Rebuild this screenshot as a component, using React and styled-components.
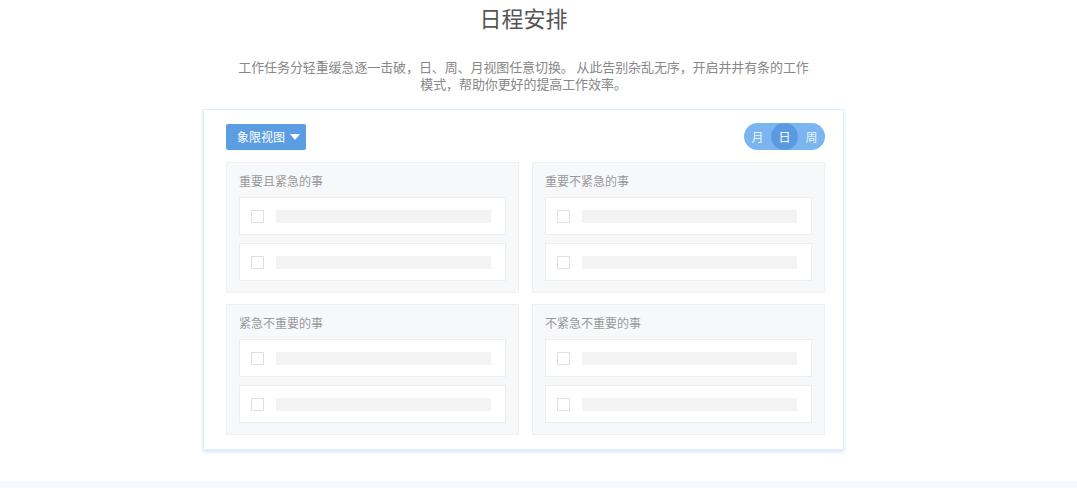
import React from 'react'
import styled, { createGlobalStyle } from 'styled-components'

const GlobalStyle = createGlobalStyle`
    body {
        margin: 0;
        background: #fff;
        font-family: "Noto Sans CJK SC", "Noto Sans", sans-serif;
    }
`

const Container = styled.div`
    width: 1047px;
    display: flex;
    flex-direction: column;
    align-items: center;
`

const Title = styled.h1`
    margin: 0;
    font-size: 22px;
    font-weight: 400;
    line-height: 34px;
    color: #555;
`

const Desc = styled.p`
    margin: 24px 0 0;
    font-size: 13px;
    line-height: 17px;
    letter-spacing: -0.1px;
    color: #888;
    text-align: center;
`

const Card = styled.div`
    width: 641px;
    box-sizing: border-box;
    margin-top: 17px;
    padding: 13px 18px 14px 22px;
    border: 1px solid #e2eef9;
    box-shadow: 0 2px 3px rgba(110, 165, 230, 0.3);
    background: #fff;
`

const Toolbar = styled.div`
    display: flex;
    justify-content: space-between;
    align-items: center;
    height: 27px;
    margin-bottom: 12px;
`

const ViewButton = styled.div`
    width: 80px;
    height: 26px;
    box-sizing: border-box;
    padding-left: 11px;
    display: flex;
    align-items: center;
    gap: 5px;
    background: #5b9de3;
    border-radius: 2px;
    color: #fff;
    font-size: 12px;
`

const Caret = styled.span`
    width: 0;
    height: 0;
    border-left: 5px solid transparent;
    border-right: 5px solid transparent;
    border-top: 6px solid #fff;
`

const Toggle = styled.div`
    display: flex;
    height: 27px;
    border-radius: 14px;
    background: #7ab5f0;
`

const ToggleItem = styled.div`
    width: 27px;
    height: 27px;
    border-radius: 50%;
    display: flex;
    align-items: center;
    justify-content: center;
    font-size: 12px;
    color: ${props => props.active ? '#fff' : 'rgba(255,255,255,0.85)'};
    background: ${props => props.active ? '#5a9ae0' : 'transparent'};
`

const Grid = styled.div`
    display: grid;
    grid-template-columns: 1fr 1fr;
    column-gap: 13px;
    row-gap: 11px;
`

const Quadrant = styled.div`
    background: #f7f8fa;
    border: 1px solid #eef0f2;
    padding: 0 12px 11px;
`

const QuadTitle = styled.div`
    padding: 9px 0 7px;
    line-height: 18px;
    font-size: 12px;
    color: #999;
`

const Rows = styled.div`
    display: flex;
    flex-direction: column;
    gap: 8px;
`

const Row = styled.div`
    height: 38px;
    box-sizing: border-box;
    background: #fff;
    border: 1px solid #eeeeee;
    display: flex;
    align-items: center;
    padding: 0 14px 0 11px;
    gap: 12px;
`

const Check = styled.span`
    width: 13px;
    height: 13px;
    box-sizing: border-box;
    border: 1px solid #e0e0e0;
    flex-shrink: 0;
`

const Bar = styled.span`
    flex: 1;
    height: 13px;
    background: #f3f3f3;
`

const Band = styled.div`
    margin-top: 31px;
    height: 8px;
    background: #f5f9fe;
`

const quadrants = ['重要且紧急的事', '重要不紧急的事', '紧急不重要的事', '不紧急不重要的事']

const App = () => {
  return (
    <>
        <GlobalStyle />
        <Container>
            <Title>日程安排</Title>
            <Desc>
                工作任务分轻重缓急逐一击破，日、周、月视图任意切换。 从此告别杂乱无序，开启井井有条的工作<br />
                模式，帮助你更好的提高工作效率。
            </Desc>
            <Card>
                <Toolbar>
                    <ViewButton>象限视图<Caret /></ViewButton>
                    <Toggle>
                        <ToggleItem>月</ToggleItem>
                        <ToggleItem active>日</ToggleItem>
                        <ToggleItem>周</ToggleItem>
                    </Toggle>
                </Toolbar>
                <Grid>
                    {quadrants.map(q => (
                        <Quadrant key={q}>
                            <QuadTitle>{q}</QuadTitle>
                            <Rows>
                                <Row><Check /><Bar /></Row>
                                <Row><Check /><Bar /></Row>
                            </Rows>
                        </Quadrant>
                    ))}
                </Grid>
            </Card>
        </Container>
        <Band />
    </>
  )
}

export default App
